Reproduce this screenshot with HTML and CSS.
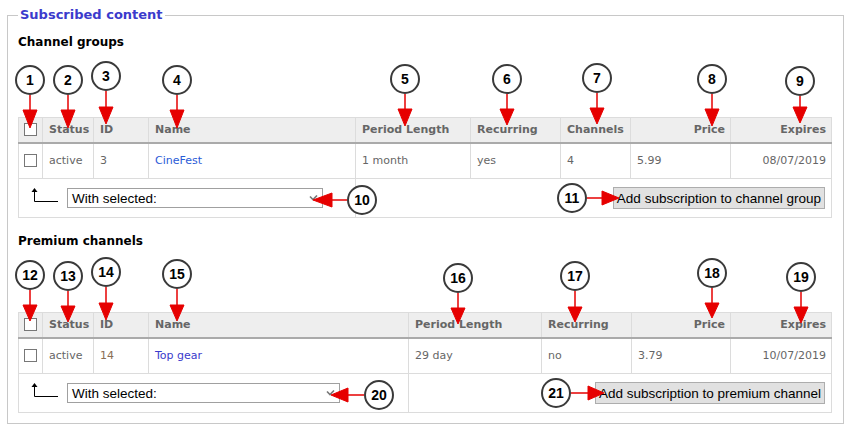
FILE: index.html
```html
<!DOCTYPE html>
<html lang="en">
<head>
  <meta charset="UTF-8">
  <title>Subscribed content</title>
  <link rel="stylesheet" href="styles.css">
</head>
<body>
  <fieldset class="panel">
    <legend>Subscribed content</legend>

    <!-- Channel groups -->
    <h3 class="section-title">Channel groups</h3>
    <table class="grid">
      <colgroup>
        <col style="width: 24px"><col style="width: 51px"><col style="width: 55px">
        <col style="width: 207px"><col style="width: 115px"><col style="width: 90px">
        <col style="width: 70px"><col style="width: 100px"><col style="width: 101px">
      </colgroup>
      <thead>
        <tr>
          <th class="check-cell"><span class="check"></span></th>
          <th>Status</th>
          <th>ID</th>
          <th>Name</th>
          <th>Period Length</th>
          <th>Recurring</th>
          <th>Channels</th>
          <th class="right">Price</th>
          <th class="right">Expires</th>
        </tr>
      </thead>
      <tbody>
        <tr>
          <td class="check-cell"><span class="check"></span></td>
          <td>active</td>
          <td>3</td>
          <td><a class="link" href="#">CineFest</a></td>
          <td>1 month</td>
          <td>yes</td>
          <td>4</td>
          <td>5.99</td>
          <td class="right">08/07/2019</td>
        </tr>
      </tbody>
      <tfoot>
        <tr>
          <td colspan="4">
            <div class="bulk">
              <svg class="back-arrow" width="28" height="16" viewBox="0 0 28 16">
                <polygon points="0.5,4 3.5,0 6.5,4" fill="#000"/>
                <polyline points="3.5,3 3.5,13.5 27,13.5" fill="none" stroke="#000" stroke-width="1"/>
              </svg>
              <div class="select select-groups">
                <span>With selected:</span>
                <svg width="9" height="6" viewBox="0 0 9 6"><polyline points="1,1.5 4,4.5 8,0.5" fill="none" stroke="#777" stroke-width="1.6"/></svg>
              </div>
            </div>
          </td>
          <td colspan="5" class="right">
            <button class="button">Add subscription to channel group</button>
          </td>
        </tr>
      </tfoot>
    </table>

    <!-- Premium channels -->
    <h3 class="section-title second">Premium channels</h3>
    <table class="grid">
      <colgroup>
        <col style="width: 24px"><col style="width: 51px"><col style="width: 55px">
        <col style="width: 260px"><col style="width: 133px"><col style="width: 90px">
        <col style="width: 99px"><col style="width: 101px">
      </colgroup>
      <thead>
        <tr>
          <th class="check-cell"><span class="check"></span></th>
          <th>Status</th>
          <th>ID</th>
          <th>Name</th>
          <th>Period Length</th>
          <th>Recurring</th>
          <th class="right">Price</th>
          <th class="right">Expires</th>
        </tr>
      </thead>
      <tbody>
        <tr>
          <td class="check-cell"><span class="check"></span></td>
          <td>active</td>
          <td class="id-warm">14</td>
          <td><a class="link visited" href="#">Top gear</a></td>
          <td>29 day</td>
          <td>no</td>
          <td>3.79</td>
          <td class="right">10/07/2019</td>
        </tr>
      </tbody>
      <tfoot>
        <tr>
          <td colspan="4">
            <div class="bulk">
              <svg class="back-arrow" width="28" height="16" viewBox="0 0 28 16">
                <polygon points="0.5,4 3.5,0 6.5,4" fill="#000"/>
                <polyline points="3.5,3 3.5,13.5 27,13.5" fill="none" stroke="#000" stroke-width="1"/>
              </svg>
              <div class="select select-channels">
                <span>With selected:</span>
                <svg width="9" height="6" viewBox="0 0 9 6"><polyline points="1,1.5 4,4.5 8,0.5" fill="none" stroke="#777" stroke-width="1.6"/></svg>
              </div>
            </div>
          </td>
          <td colspan="4" class="right">
            <button class="button">Add subscription to premium channel</button>
          </td>
        </tr>
      </tfoot>
    </table>
  </fieldset>

  <!-- numbered annotations drawn over the page -->
  <svg class="callouts" width="850" height="427" viewBox="0 0 850 427">
    <g class="arrows" fill="#e60000" stroke="#e60000">
      <!-- top table, pointing down -->
      <line x1="30" y1="95" x2="30" y2="111"/><polygon points="23,110 37,110 30,128"/>
      <line x1="68" y1="95" x2="68" y2="111"/><polygon points="61,110 75,110 68,128"/>
      <line x1="106" y1="91" x2="106" y2="108"/><polygon points="99,107 113,107 106,124"/>
      <line x1="177" y1="95" x2="177" y2="111"/><polygon points="170,110 184,110 177,128"/>
      <line x1="405" y1="94" x2="405" y2="110"/><polygon points="398,109 412,109 405,126"/>
      <line x1="507" y1="94" x2="507" y2="110"/><polygon points="500,109 514,109 507,125"/>
      <line x1="597" y1="93" x2="597" y2="109"/><polygon points="590,108 604,108 597,124"/>
      <line x1="712" y1="94" x2="712" y2="110"/><polygon points="705,109 719,109 712,126"/>
      <line x1="800" y1="96" x2="800" y2="108"/><polygon points="793,107 807,107 800,123"/>
      <!-- top table, pointing sideways -->
      <line x1="347" y1="200" x2="330" y2="200"/><polygon points="332,193 332,207 313,200"/>
      <line x1="587" y1="198" x2="604" y2="198"/><polygon points="602,191 602,205 619,198"/>
      <!-- bottom table, pointing down -->
      <line x1="30" y1="290" x2="30" y2="306"/><polygon points="23,305 37,305 30,321"/>
      <line x1="68" y1="291" x2="68" y2="307"/><polygon points="61,306 75,306 68,322"/>
      <line x1="106" y1="287" x2="106" y2="304"/><polygon points="99,303 113,303 106,320"/>
      <line x1="177" y1="289" x2="177" y2="306"/><polygon points="170,305 184,305 177,321"/>
      <line x1="458" y1="293" x2="458" y2="309"/><polygon points="451,308 465,308 458,324"/>
      <line x1="575" y1="291" x2="575" y2="308"/><polygon points="568,307 582,307 575,322"/>
      <line x1="712" y1="288" x2="712" y2="304"/><polygon points="705,303 719,303 712,318"/>
      <line x1="801" y1="292" x2="801" y2="308"/><polygon points="794,307 808,307 801,323"/>
      <!-- bottom table, pointing sideways -->
      <line x1="364" y1="395" x2="346" y2="395"/><polygon points="348,388 348,402 331,395"/>
      <line x1="571" y1="393" x2="589" y2="393"/><polygon points="588,386 588,400 604,393"/>
    </g>
    <g class="badges">
      <circle cx="30" cy="80" r="14"/><text x="30" y="85">1</text>
      <circle cx="68" cy="80" r="14"/><text x="68" y="85">2</text>
      <circle cx="106" cy="76" r="14"/><text x="106" y="81">3</text>
      <circle cx="177" cy="80" r="14"/><text x="177" y="85">4</text>
      <circle cx="405" cy="79" r="14"/><text x="405" y="84">5</text>
      <circle cx="507" cy="79" r="14"/><text x="507" y="84">6</text>
      <circle cx="597" cy="78" r="14"/><text x="597" y="83">7</text>
      <circle cx="712" cy="79" r="14"/><text x="712" y="84">8</text>
      <circle cx="800" cy="81" r="14"/><text x="800" y="86">9</text>
      <circle cx="362" cy="200" r="14"/><text x="362" y="205">10</text>
      <circle cx="572" cy="198" r="14"/><text x="572" y="203">11</text>
      <circle cx="30" cy="275" r="14"/><text x="30" y="280">12</text>
      <circle cx="68" cy="276" r="14"/><text x="68" y="281">13</text>
      <circle cx="106" cy="272" r="14"/><text x="106" y="277">14</text>
      <circle cx="177" cy="274" r="14"/><text x="177" y="279">15</text>
      <circle cx="458" cy="278" r="14"/><text x="458" y="283">16</text>
      <circle cx="575" cy="276" r="14"/><text x="575" y="281">17</text>
      <circle cx="712" cy="273" r="14"/><text x="712" y="278">18</text>
      <circle cx="801" cy="277" r="14"/><text x="801" y="282">19</text>
      <circle cx="379" cy="395" r="14"/><text x="379" y="400">20</text>
      <circle cx="556" cy="393" r="14"/><text x="556" y="398">21</text>
    </g>
  </svg>
</body>
</html>
```

FILE: styles.css
```css
* {
  box-sizing: border-box;
}

body {
  margin: 0;
  position: relative;
  background: #fff;
  font-family: 'DejaVu Sans', Verdana, sans-serif;
  font-size: 11px;
  color: #666;
}

.panel {
  margin: 7px 7px 0 7px;
  padding: 11px 11px 10px 10px;
  border: 1px solid #c8c8c8;
}

.panel legend {
  padding: 0 2px;
  font-size: 13px;
  line-height: 16px;
  font-weight: bold;
  color: #3b3bcc;
}

.section-title {
  margin: 0;
  font-size: 12px;
  line-height: 16px;
  font-weight: bold;
  color: #000;
}

.section-title.second {
  margin-top: 15px;
}

.grid {
  width: 813px;
  margin-top: 67px;
  border-collapse: collapse;
  table-layout: fixed;
  border: 1px solid #dcdcdc;
}

.section-title.second + .grid {
  margin-top: 63px;
}

.grid th {
  height: 25px;
  padding: 0 5px 0 6px;
  background: #eeeeee;
  border-left: 1px solid #dcdcdc;
  border-bottom: 2px solid #aaaaaa;
  text-align: left;
  font-weight: bold;
  color: #666;
  white-space: nowrap;
}

.grid td {
  height: 36px;
  padding: 0 5px 0 6px;
  border: 1px solid #dcdcdc;
  color: #666;
  white-space: nowrap;
}

.grid tfoot td {
  height: 39px;
}

.grid .right {
  text-align: right;
}

.grid .check-cell {
  padding: 0 0 0 5px;
}

.check {
  display: block;
  width: 13px;
  height: 13px;
  border: 1px solid #777;
  background: #fff;
}

.link {
  color: #2a5bd7;
  text-decoration: none;
}

.link.visited {
  color: #3a3acc;
}

.id-warm {
  color: #8a6e55 !important;
}

.bulk {
  display: flex;
  align-items: center;
  gap: 8px;
  padding-left: 6px;
}

.back-arrow {
  margin-top: -4px;
}

.select {
  display: flex;
  align-items: center;
  justify-content: space-between;
  height: 20px;
  padding: 0 4px 0 4px;
  border: 1px solid #a0a0a0;
  background: #fff;
  font-family: 'Liberation Sans', Arial, sans-serif;
  font-size: 13.5px;
  color: #000;
}

.select-groups {
  width: 256px;
}

.select-channels {
  width: 273px;
}

.button {
  height: 22px;
  margin-right: 1px;
  padding: 0 3px;
  border: 1px solid #adadad;
  background: #e1e1e1;
  font-family: 'Liberation Sans', Arial, sans-serif;
  font-size: 13.5px;
  color: #000;
  border-radius: 0;
}

.callouts {
  position: absolute;
  left: 0;
  top: 0;
  pointer-events: none;
}

.callouts line {
  stroke-width: 1.5;
}

.badges circle {
  fill: #fff;
  stroke: #3a3a3a;
  stroke-width: 2;
}

.badges text {
  font-family: 'Liberation Sans', Arial, sans-serif;
  font-size: 14px;
  font-weight: bold;
  fill: #000;
  text-anchor: middle;
}
```
